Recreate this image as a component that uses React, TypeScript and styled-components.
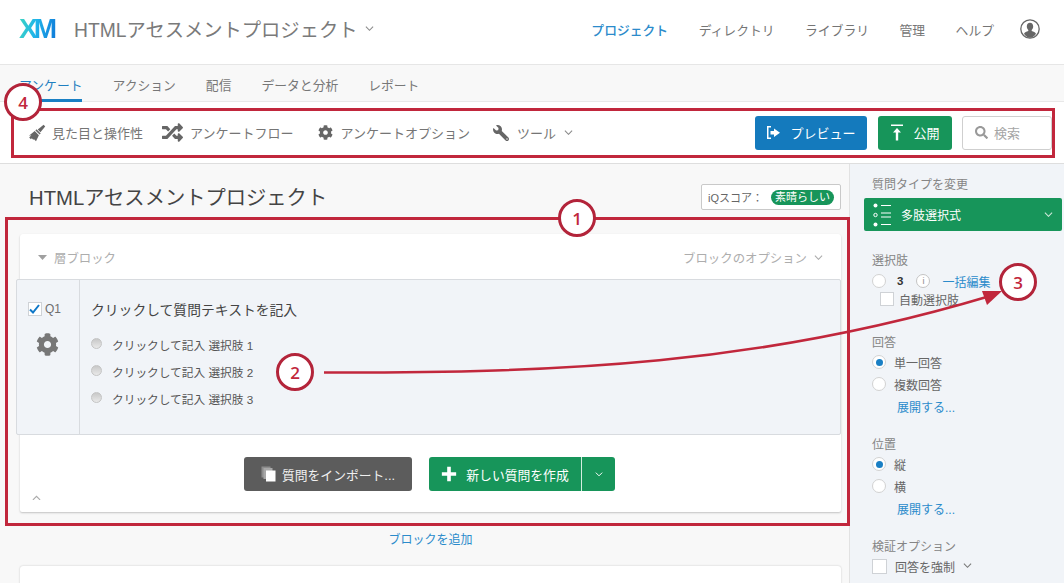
import React from "react";
import styled, { createGlobalStyle } from "styled-components";
import { FaCog, FaRandom, FaSearch, FaWrench } from "react-icons/fa";

const Global = createGlobalStyle`
  html, body { margin: 0; padding: 0; height: 100%; overflow: hidden; background: #f8f8f8; }
  * { box-sizing: border-box; }
  #root { height: 583px; }
`;

const Page = styled.div`
  position: relative;
  width: 1064px;
  height: 583px;
  overflow: hidden;
  font-family: "Liberation Sans", "Noto Sans CJK JP", sans-serif;
  font-size: 13px;
  color: #6b6b6b;
`;

const Header = styled.header`
  height: 65px;
  background: #fff;
  border-bottom: 1px solid #e6e6e6;
  display: flex;
  align-items: center;
  padding: 0 24px 6px 19px;
`;

const Logo = styled.div`
  width: 37px;
  font-size: 28px;
  line-height: 28px;
  font-weight: 700;
  letter-spacing: -4px;
  white-space: nowrap;
  background: linear-gradient(100deg, #3fd6c0 0%, #1fb4ea 45%, #0f78d8 100%);
  -webkit-background-clip: text;
  background-clip: text;
  color: transparent;
`;

const ProjectTitle = styled.div`
  margin-left: 18px;
  font-size: 19.3px;
  color: #7a7a7a;
  display: flex;
  align-items: center;
  gap: 8px;
  white-space: nowrap;
`;

const TopNav = styled.nav`
  margin-left: auto;
  display: flex;
  align-items: center;
  gap: 30.5px;
`;

const TopLink = styled.span<{ $active?: boolean }>`
  font-size: 12.8px;
  white-space: nowrap;
  color: ${(p) => (p.$active ? "#2b8bcb" : "#757575")};
  font-weight: ${(p) => (p.$active ? 500 : 400)};
`;

const AvatarSlot = styled.span`
  display: flex;
  margin-left: -4.5px;
`;

const Tabs = styled.div`
  height: 37px;
  background: #f8f8f8;
  border-bottom: 1px solid #e8e8e8;
  display: flex;
  gap: 30px;
  padding-left: 19px;
`;

const Tab = styled.div<{ $active?: boolean }>`
  height: 37px;
  padding-top: 10px;
  font-size: 12.8px;
  white-space: nowrap;
  color: ${(p) => (p.$active ? "#1f7fc0" : "#777")};
  border-bottom: ${(p) => (p.$active ? "3px solid #1a80c4" : "none")};
`;

const Toolbar = styled.div`
  height: 62px;
  background: #fff;
  border-bottom: 1px solid #dedede;
  display: flex;
  align-items: center;
  padding: 0 12px 0 28px;
`;

const ToolItem = styled.div<{ $gap: number; $next: number }>`
  display: flex;
  align-items: center;
  gap: ${(p) => p.$gap}px;
  margin-right: ${(p) => p.$next}px;
  color: #757575;
  font-size: 13px;
  white-space: nowrap;
  svg { color: #666; flex: none; }
`;

const MirroredWrench = styled(FaWrench)`
  transform: scaleX(-1);
`;

const ActionButton = styled.div<{ $bg: string; $w: number }>`
  width: ${(p) => p.$w}px;
  height: 34px;
  border-radius: 3px;
  background: ${(p) => p.$bg};
  color: #fff;
  font-size: 13px;
  display: flex;
  align-items: center;
  justify-content: center;
  gap: 9px;
  white-space: nowrap;
`;

const Actions = styled.div`
  margin-left: auto;
  display: flex;
  gap: 11px;
`;

const SearchBox = styled.div`
  width: 90px;
  height: 34px;
  margin-left: -1px;
  background: #fff;
  border: 1px solid #cfcfcf;
  border-radius: 3px;
  display: flex;
  align-items: center;
  gap: 6px;
  padding-left: 12px;
  color: #a5a5a5;
  font-size: 13px;
`;

const Body = styled.div`
  display: flex;
  height: 419px;
`;

const Main = styled.main`
  width: 850px;
  flex: none;
  background: #f8f8f8;
  border-right: 1px solid #e2e2e2;
  padding: 20px 8px 0 20px;
`;

const MainHead = styled.div`
  height: 50px;
  display: flex;
  justify-content: space-between;
  align-items: flex-start;
`;

const SurveyTitle = styled.h1`
  margin: 1px 0 0 9px;
  font-size: 20.3px;
  line-height: 26px;
  font-weight: 400;
  color: #444;
  white-space: nowrap;
`;

const ScoreBox = styled.div`
  width: 140px;
  height: 26px;
  background: #fff;
  border: 1px solid #c9c9c9;
  border-radius: 2px;
  display: flex;
  align-items: center;
  justify-content: center;
  gap: 8px;
  font-size: 11px;
  color: #666;
  white-space: nowrap;
`;

const ScorePill = styled.span`
  background: #17955a;
  color: #fff;
  border-radius: 8px;
  font-size: 11px;
  line-height: 15px;
  padding: 0 4px;
`;

const Block = styled.section`
  width: 821px;
  height: 278px;
  background: #fff;
  border-radius: 3px 3px 2px 2px;
  box-shadow: 0 1px 2px rgba(0, 0, 0, 0.22);
  display: flex;
  flex-direction: column;
`;

const BlockHead = styled.div`
  height: 45px;
  flex: none;
  display: flex;
  align-items: center;
  justify-content: space-between;
  padding: 2px 18px 0 18px;
  font-size: 12.4px;
  color: #adadad;
`;

const BlockHeadSide = styled.span`
  display: flex;
  align-items: center;
  gap: 7px;
`;

const Question = styled.div`
  height: 156px;
  flex: none;
  margin: 0 0 0 -4px;
  width: 825px;
  background: #f1f4f8;
  border: 1px solid #d8dbdf;
  border-radius: 2px;
  display: flex;
`;

const QuestionSide = styled.div`
  width: 63px;
  flex: none;
  border-right: 1px solid #d8dbdf;
  display: flex;
  flex-direction: column;
  align-items: center;
  padding: 22px 1px 0 0;
  gap: 17px;
  color: #666;
`;

const QuestionId = styled.div`
  display: flex;
  align-items: center;
  gap: 3px;
  margin-right: 6px;
  font-size: 12px;
  color: #6e6e6e;
`;

const CheckBox = styled.span<{ $size: number }>`
  width: ${(p) => p.$size}px;
  height: ${(p) => p.$size}px;
  flex: none;
  background: #fff;
  border: 1px solid #cfd2d6;
  display: inline-flex;
  align-items: center;
  justify-content: center;
`;

const QuestionBody = styled.div`
  padding: 22px 0 0 11px;
`;

const QuestionText = styled.div`
  font-size: 13.8px;
  line-height: 18px;
  color: #444;
  margin-bottom: 12px;
`;

const ChoiceRow = styled.div`
  height: 27px;
  display: flex;
  align-items: center;
  gap: 10px;
  font-size: 11.7px;
  color: #555;
  padding-bottom: 2px;
`;

const ChoiceDot = styled.span`
  width: 11px;
  height: 11px;
  margin-bottom: 3px;
  border-radius: 50%;
  border: 1px solid #c4c4c4;
  background: linear-gradient(#c8c8c8, #e9e9e9);
`;

const BlockFoot = styled.div`
  position: relative;
  flex: 1;
  display: flex;
  gap: 17px;
  padding: 22px 0 0 224px;
`;

const CollapseMark = styled.span`
  position: absolute;
  left: 12px;
  bottom: 12px;
  display: flex;
`;

const ImportButton = styled.div`
  width: 168px;
  height: 34px;
  background: #5c5c5c;
  border-radius: 3px;
  color: #f0f0f0;
  font-size: 12.8px;
  display: flex;
  align-items: center;
  justify-content: center;
  gap: 6px;
  white-space: nowrap;
`;

const SplitButton = styled.div`
  width: 186px;
  height: 34px;
  background: #17955a;
  border-radius: 3px;
  color: #fff;
  font-size: 12.8px;
  display: flex;
  align-items: center;
  white-space: nowrap;
`;

const SplitMain = styled.span`
  width: 153px;
  height: 100%;
  display: flex;
  align-items: center;
  justify-content: center;
  gap: 9px;
  border-right: 1px solid #d4eee0;
`;

const SplitCaret = styled.span`
  flex: 1;
  display: flex;
  justify-content: center;
`;

const AddBlock = styled.div`
  height: 54px;
  display: flex;
  align-items: center;
  justify-content: center;
  color: #2b8bcb;
  font-size: 12px;
  padding-bottom: 2px;
`;

const NextBlock = styled.div`
  width: 821px;
  height: 60px;
  background: #fff;
  border-radius: 3px;
  box-shadow: 0 0 2px rgba(0, 0, 0, 0.22);
`;

const Sidebar = styled.aside`
  flex: 1;
  background: #f1f4f8;
  padding: 13px 2px 0 14px;
`;

const SideSection = styled.div<{ $top: number }>`
  margin-top: ${(p) => p.$top}px;
  padding-left: 8px;
`;

const SideLabel = styled.div`
  font-size: 12px;
  line-height: 16px;
  color: #858585;
  white-space: nowrap;
`;

const TypeSelect = styled.div`
  width: 198px;
  height: 33px;
  margin-top: 5px;
  background: #17955a;
  border-radius: 2px;
  color: #fff;
  font-size: 12px;
  display: flex;
  align-items: center;
  padding: 0 9px;
  gap: 9px;
  span { flex: 1; }
`;

const OptionRow = styled.div`
  height: 22px;
  display: flex;
  align-items: center;
  gap: 8px;
  font-size: 12px;
  color: #666;
  white-space: nowrap;
`;

const CountRow = styled(OptionRow)`
  margin-top: 1px;
`;

const AutoRow = styled(OptionRow)`
  height: 14px;
  margin-left: 8px;
  gap: 5px;
`;

const Radio = styled.span<{ $on?: boolean }>`
  width: 14px;
  height: 14px;
  flex: none;
  border-radius: 50%;
  border: 1px solid #d2d2d2;
  background: #fff;
  display: inline-flex;
  align-items: center;
  justify-content: center;
  &::after {
    content: "";
    display: ${(p) => (p.$on ? "block" : "none")};
    width: 7px;
    height: 7px;
    border-radius: 50%;
    background: #1a7fc4;
  }
`;

const ChoiceCount = styled.span`
  color: #333;
  font-weight: 700;
  font-size: 11.5px;
  margin: 0 5px 0 3px;
`;

const InfoMark = styled.span`
  width: 14px;
  height: 14px;
  flex: none;
  border: 1px solid #c4c4c4;
  border-radius: 50%;
  background: #fff;
  color: #888;
  font-size: 9px;
  line-height: 12px;
  text-align: center;
`;

const BlueLink = styled.span<{ $indent?: number }>`
  color: #2b8bcb;
  font-size: 12px;
  margin-left: ${(p) => p.$indent ?? 0}px;
  white-space: nowrap;
`;

const RowLink = styled.div`
  height: 22px;
  display: flex;
  align-items: center;
  padding-left: 25px;
`;

const Frame = styled.div<{ $l: number; $t: number; $w: number; $h: number }>`
  position: absolute;
  left: ${(p) => p.$l}px;
  top: ${(p) => p.$t}px;
  width: ${(p) => p.$w}px;
  height: ${(p) => p.$h}px;
  border: 3px solid #c1273c;
  pointer-events: none;
`;

const Marker = styled.div<{ $x: number; $y: number }>`
  position: absolute;
  left: ${(p) => p.$x - 19}px;
  top: ${(p) => p.$y - 19}px;
  width: 38px;
  height: 38px;
  border: 3px solid #b3243a;
  border-radius: 50%;
  background: #fff;
  color: #c1273c;
  font-family: "Open Sans", sans-serif;
  font-size: 17px;
  font-weight: 600;
  display: flex;
  align-items: center;
  justify-content: center;
`;

const ArrowLayer = styled.svg`
  position: absolute;
  left: 0;
  top: 0;
  pointer-events: none;
`;

const Chevron = ({ size = 9, color = "#8a8a8a", up = false }: { size?: number; color?: string; up?: boolean }) => (
  <svg width={size} height={size * 0.6} viewBox="0 0 10 6" fill="none" stroke={color} strokeWidth="1.2">
    <path d={up ? "M1 5.5 5 1.5 9 5.5" : "M1 .8 5 4.8 9 .8"} />
  </svg>
);

const Avatar = () => (
  <svg width="20" height="20" viewBox="0 0 20 20">
    <circle cx="10" cy="10" r="9.2" fill="#fff" stroke="#666" strokeWidth="1.3" />
    <path d="M10 3.8c2 0 3.2 1.5 3.2 3.6 0 1.5-.7 2.8-1.5 3.5v1.2c1.8.6 3.6 1.3 4.3 2.6A8 8 0 0 1 10 18.8 8 8 0 0 1 4 14.700c.7-1.300 2.500-2 4.300-2.600v-1.200c-.8-.7-1.500-2-1.500-3.500 0-2.100 1.200-3.600 3.200-3.600z" fill="#666" />
  </svg>
);

const BrushIcon = () => (
  <svg width="18" height="18" viewBox="0 0 18 18" fill="#666">
    <path d="M15.600 0.800 17.200 2.400 12.400 8.200 9.800 5.600z" />
    <path d="M8.500 5.300 12.700 9.500 11.600 10.600 7.400 6.400z" />
    <path d="M6.700 7.100 10.900 11.300 8 17.200 5.800 15 5.400 15.900 3.800 14.300 2.900 15.200 1.200 13.400 3.300 11.200 0.900 11.800z" />
  </svg>
);

const PreviewIcon = () => (
  <svg width="15" height="15" viewBox="0 0 15 15" fill="#fff">
    <path d="M5 1H1v13h4v-1.500H2.500v-10H5z" />
    <path d="M8 3.500v2.500H4.500v3.500H8V12l6-4.250z" />
  </svg>
);

const PublishIcon = () => (
  <svg width="14" height="17" viewBox="0 0 14 17" fill="#fff">
    <rect x="1" y="0.500" width="12" height="1.500" />
    <path d="M7 4l4 4.500H8.200V16.500H5.800V8.500H3z" />
  </svg>
);

const ImportIcon = () => (
  <svg width="15" height="16" viewBox="0 0 15 16">
    <rect x="0.500" y="0.500" width="9" height="11" fill="#8d8d8d" />
    <rect x="2.500" y="2" width="9" height="11" fill="#a8a8a8" />
    <rect x="5" y="4.500" width="9.500" height="11" fill="#fff" />
  </svg>
);

const PlusIcon = () => (
  <svg width="16" height="16" viewBox="0 0 15 15" fill="#fff">
    <path d="M5.800.8h3.400v5h5v3.400h-5v5H5.800v-5h-5V5.800h5z" />
  </svg>
);

const ListIcon = () => (
  <svg width="19" height="26" viewBox="0 0 19 26" fill="none">
    <circle cx="2.500" cy="3.500" r="2" fill="#fff" />
    <circle cx="2.500" cy="13" r="1.700" stroke="#fff" />
    <circle cx="2.500" cy="22.500" r="2" fill="#fff" />
    <path d="M8 3.500h10M8 11h10M8 15h10M8 22.500h10" stroke="#fff" strokeWidth="1" />
  </svg>
);

const CheckMark = () => (
  <svg width="11" height="10" viewBox="0 0 11 10" fill="none" stroke="#0f78c8" strokeWidth="2">
    <path d="M1 5.500 4 8.500 10 1" />
  </svg>
);

const Caret = () => (
  <svg width="9" height="5" viewBox="0 0 9 5" fill="#a0a0a0">
    <path d="M0 0h9L4.500 5z" />
  </svg>
);

const Choice = ({ label }: { label: string }) => (
  <ChoiceRow>
    <ChoiceDot />
    {label}
  </ChoiceRow>
);

export default function App() {
  return (
    <Page>
      <Global />
      <Header>
        <Logo>XM</Logo>
        <ProjectTitle>
          HTMLアセスメントプロジェクト
          <Chevron size={9} />
        </ProjectTitle>
        <TopNav>
          <TopLink $active>プロジェクト</TopLink>
          <TopLink>ディレクトリ</TopLink>
          <TopLink>ライブラリ</TopLink>
          <TopLink>管理</TopLink>
          <TopLink>ヘルプ</TopLink>
          <AvatarSlot>
            <Avatar />
          </AvatarSlot>
        </TopNav>
      </Header>
      <Tabs>
        <Tab $active>アンケート</Tab>
        <Tab>アクション</Tab>
        <Tab>配信</Tab>
        <Tab>データと分析</Tab>
        <Tab>レポート</Tab>
      </Tabs>
      <Toolbar>
        <ToolItem $gap={6} $next={19}>
          <BrushIcon />
          見た目と操作性
        </ToolItem>
        <ToolItem $gap={7} $next={24}>
          <FaRandom size={21} />
          アンケートフロー
        </ToolItem>
        <ToolItem $gap={8} $next={23}>
          <FaCog size={15} />
          アンケートオプション
        </ToolItem>
        <ToolItem $gap={8} $next={0}>
          <MirroredWrench size={16} />
          ツール
          <Chevron size={9} />
        </ToolItem>
        <Actions>
          <ActionButton $bg="#147abd" $w={112}>
            <PreviewIcon />
            プレビュー
          </ActionButton>
          <ActionButton $bg="#17955a" $w={74}>
            <PublishIcon />
            公開
          </ActionButton>
          <SearchBox>
            <FaSearch size={13} color="#999" />
            検索
          </SearchBox>
        </Actions>
      </Toolbar>
      <Body>
        <Main>
          <MainHead>
            <SurveyTitle>HTMLアセスメントプロジェクト</SurveyTitle>
            <ScoreBox>
              iQスコア：
              <ScorePill>素晴らしい</ScorePill>
            </ScoreBox>
          </MainHead>
          <Block>
            <BlockHead>
              <BlockHeadSide>
                <Caret />
                層ブロック
              </BlockHeadSide>
              <BlockHeadSide>
                ブロックのオプション
                <Chevron size={9} color="#aaa" />
              </BlockHeadSide>
            </BlockHead>
            <Question>
              <QuestionSide>
                <QuestionId>
                  <CheckBox $size={14}>
                    <CheckMark />
                  </CheckBox>
                  Q1
                </QuestionId>
                <FaCog size={23} color="#777" />
              </QuestionSide>
              <QuestionBody>
                <QuestionText>クリックして質問テキストを記入</QuestionText>
                <Choice label="クリックして記入 選択肢 1" />
                <Choice label="クリックして記入 選択肢 2" />
                <Choice label="クリックして記入 選択肢 3" />
              </QuestionBody>
            </Question>
            <BlockFoot>
              <CollapseMark>
                <Chevron size={9} color="#aaa" up />
              </CollapseMark>
              <ImportButton>
                <ImportIcon />
                質問をインポート...
              </ImportButton>
              <SplitButton>
                <SplitMain>
                  <PlusIcon />
                  新しい質問を作成
                </SplitMain>
                <SplitCaret>
                  <Chevron size={8} color="#fff" />
                </SplitCaret>
              </SplitButton>
            </BlockFoot>
          </Block>
          <AddBlock>ブロックを追加</AddBlock>
          <NextBlock />
        </Main>
        <Sidebar>
          <SideSection $top={0}>
            <SideLabel>質問タイプを変更</SideLabel>
          </SideSection>
          <TypeSelect>
            <ListIcon />
            <span>多肢選択式</span>
            <Chevron size={9} color="#cfe9da" />
          </TypeSelect>
          <SideSection $top={22}>
            <SideLabel>選択肢</SideLabel>
            <CountRow>
              <Radio />
              <ChoiceCount>3</ChoiceCount>
              <InfoMark>i</InfoMark>
              <BlueLink $indent={4}>一括編集</BlueLink>
            </CountRow>
            <AutoRow>
              <CheckBox $size={14} />
              自動選択肢
            </AutoRow>
          </SideSection>
          <SideSection $top={29}>
            <SideLabel>回答</SideLabel>
            <OptionRow>
              <Radio $on />
              単一回答
            </OptionRow>
            <OptionRow>
              <Radio />
              複数回答
            </OptionRow>
            <RowLink>
              <BlueLink>展開する...</BlueLink>
            </RowLink>
          </SideSection>
          <SideSection $top={20}>
            <SideLabel>位置</SideLabel>
            <OptionRow>
              <Radio $on />縦
            </OptionRow>
            <OptionRow>
              <Radio />横
            </OptionRow>
            <RowLink>
              <BlueLink>展開する...</BlueLink>
            </RowLink>
          </SideSection>
          <SideSection $top={20}>
            <SideLabel>検証オプション</SideLabel>
            <OptionRow>
              <CheckBox $size={15} />
              回答を強制
              <Chevron size={9} color="#777" />
            </OptionRow>
          </SideSection>
        </Sidebar>
      </Body>
      <ArrowLayer width="1064" height="583" viewBox="0 0 1064 583" fill="none">
        <path d="M324 372.500 C 560 373, 760 365, 990 296" stroke="#c1273c" strokeWidth="2.500" />
        <path d="M1002 291 982 291 987 305z" fill="#c1273c" />
      </ArrowLayer>
      <Frame $l={5} $t={217} $w={845} $h={309} />
      <Frame $l={11} $t={108} $w={1044} $h={50} />
      <Marker $x={577} $y={218}>1</Marker>
      <Marker $x={295} $y={372}>2</Marker>
      <Marker $x={1018} $y={282}>3</Marker>
      <Marker $x={23} $y={102}>4</Marker>
    </Page>
  );
}
